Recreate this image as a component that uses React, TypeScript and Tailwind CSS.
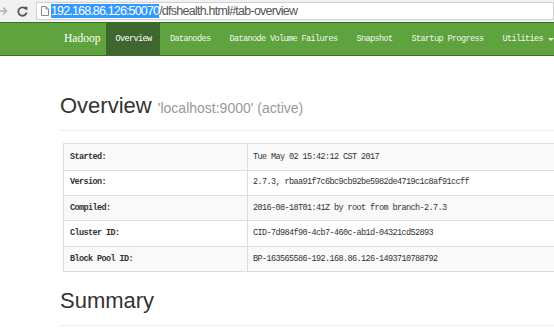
import React from 'react';

const navLinks = ['Datanodes', 'Datanode Volume Failures', 'Snapshot', 'Startup Progress'];

const rows: [string, string][] = [
  ['Started:', 'Tue May 02 15:42:12 CST 2017'],
  ['Version:', '2.7.3, rbaa91f7c6bc9cb92be5982de4719c1c8af91ccff'],
  ['Compiled:', '2016-08-18T01:41Z by root from branch-2.7.3'],
  ['Cluster ID:', 'CID-7d984f90-4cb7-460c-ab1d-04321cd52893'],
  ['Block Pool ID:', 'BP-163565586-192.168.86.126-1493710788792'],
];

const mono = "font-['Liberation_Mono',monospace]";
const sans = "font-['Liberation_Sans',Arial,sans-serif]";

function AddressBar() {
  return (
    <div className="h-[22px] bg-[#f1f1f1] flex items-center">
      {/* forward arrow (disabled) */}
      <svg width="9" height="10" viewBox="0 0 9 10" className="ml-[-1px]">
        <path d="M0 5h7M4 1.5L7.5 5 4 8.5" stroke="#b5b5b5" strokeWidth="1.6" fill="none" />
      </svg>
      {/* reload */}
      <svg width="11" height="11" viewBox="0 0 11 11" className="ml-[9px]">
        <path d="M9 3.2A4.2 4.2 0 1 0 9.6 6.5" stroke="#555" strokeWidth="1.8" fill="none" />
        <path d="M6.6 0.8L10.4 0.8 10.4 4.6Z" fill="#555" />
      </svg>
      <div className="ml-[8px] flex-1 h-[18px] bg-white border border-[#d0d0d0] flex items-center">
        <svg width="8" height="10" viewBox="0 0 8 10" className="ml-[4px]">
          <path d="M0.5 0.5h4.5l2.5 2.5v6.5h-7z M5 0.5v2.5h2.5" stroke="#888" strokeWidth="1" fill="none" />
        </svg>
        <div className={`ml-[2px] text-[12.5px] leading-[15px] text-[#555] ${sans}`}>
          <span className="bg-[#3399ff] text-white tracking-[-0.85px]">192.168.86.126:50070</span>
          <span className="tracking-[-0.75px]">/dfshealth.html#tab-overview</span>
        </div>
      </div>
    </div>
  );
}

function NavBar() {
  return (
    <div className="h-[34px] bg-[#5fa33e] border-y border-[#3b6e27] flex items-stretch pl-[64px] whitespace-nowrap">
      <div className="w-[45px] flex items-center text-white text-[11.5px] font-['Liberation_Serif',serif]">
        Hadoop
      </div>
      <div className={`flex items-center px-[9px] bg-[#3e6730] text-white text-[8.5px] tracking-[-0.6px] ${mono}`}>
        Overview
      </div>
      {navLinks.map((l) => (
        <div key={l} className={`flex items-center px-[9.5px] text-[#f2f7ee] text-[8.5px] tracking-[-0.6px] ${mono}`}>
          {l}
        </div>
      ))}
      <div className={`flex items-center pl-[9.5px] text-[#f2f7ee] text-[8.5px] tracking-[-0.6px] ${mono}`}>
        Utilities
        <span className="ml-[5px] inline-block w-0 h-0 border-x-[3px] border-x-transparent border-t-[3px] border-t-[#e4eedd]" />
      </div>
    </div>
  );
}

export default function App() {
  return (
    <div className="w-[554px] h-[332px] overflow-hidden bg-white">
      <AddressBar />
      <NavBar />
      <div className="pl-[60px] mt-[38px]">
        <div className="pb-[12px] border-b border-[#eeeeee]">
          <h1 className={`text-[22px] leading-[1.1] text-[#333] whitespace-nowrap ${sans}`}>
            Overview <span className="text-[14px] text-[#999]">'localhost:9000' (active)</span>
          </h1>
        </div>
        <div className="mt-[12px] ml-[3px] w-[520px] border border-[#dddddd]">
          {rows.map(([k, v], i) => (
            <div
              key={k}
              className={`grid grid-cols-[184px_1fr] h-[25.4px] ${i > 0 ? 'border-t border-[#dddddd]' : ''} ${
                i % 2 === 0 ? 'bg-[#f9f9f9]' : 'bg-white'
              }`}
            >
              <div className={`flex items-center pl-[6px] border-r border-[#dddddd] text-[8.5px] tracking-[-0.6px] font-bold text-[#333] ${mono}`}>
                {k}
              </div>
              <div className={`flex items-center pl-[5px] text-[8.5px] tracking-[-0.6px] text-[#333] whitespace-nowrap ${mono}`}>
                {v}
              </div>
            </div>
          ))}
        </div>
        <div className="mt-[17px] pb-[12px] border-b border-[#eeeeee]">
          <h1 className={`text-[22px] leading-[1.1] text-[#333] ${sans}`}>Summary</h1>
        </div>
      </div>
    </div>
  );
}
